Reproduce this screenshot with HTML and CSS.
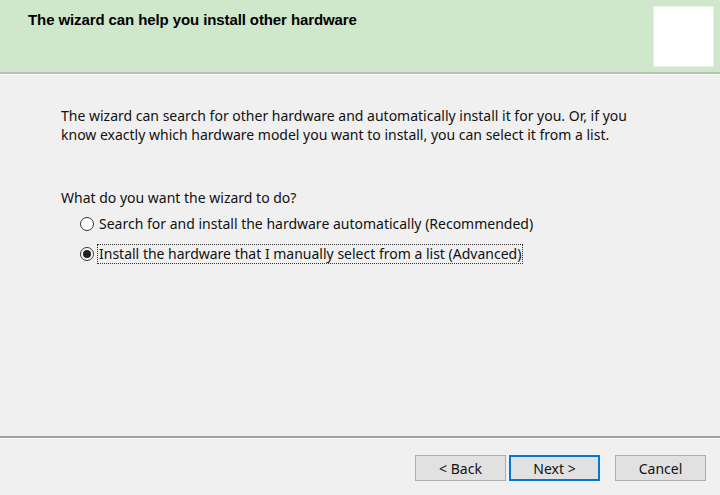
FILE: index.html
```html
<!DOCTYPE html>
<html lang="en">
<head>
<meta charset="utf-8">
<title>Add Hardware</title>
<link rel="stylesheet" href="styles.css">
</head>
<body>
<div class="wizard">
  <header class="head">
    <h1 class="title">The wizard can help you install other hardware</h1>
    <div class="logo"></div>
  </header>
  <main class="content">
    <p class="intro">The wizard can search for other hardware and automatically install it for you. Or, if you know exactly which hardware model you want to install, you can select it from a list.</p>
    <p class="question">What do you want the wizard to do?</p>
    <div class="options">
      <div class="opt"><span class="radio"></span><span class="label">Search for and install the hardware automatically (Recommended)</span></div>
      <div class="opt"><span class="radio checked"></span><span class="label focus">Install the hardware that I manually select from a list (Advanced)</span></div>
    </div>
  </main>
  <footer class="foot">
    <div class="nav">
      <button class="btn">&lt; Back</button>
      <button class="btn default">Next &gt;</button>
    </div>
    <button class="btn">Cancel</button>
  </footer>
</div>
</body>
</html>
```

FILE: styles.css
```css
html, body {
  margin: 0;
  padding: 0;
  background: #f0f0f0;
}
.wizard {
  width: 720px;
  height: 495px;
  display: flex;
  flex-direction: column;
  font-family: "Noto Sans", "Liberation Sans", sans-serif;
  font-size: 14px;
  color: #111;
}
.head {
  height: 72px;
  background: #cfe8cc;
  border-bottom: 2px solid #b3c4b0;
  box-shadow: 0 1px 0 #fbfbfb;
  display: flex;
  justify-content: space-between;
  align-items: flex-start;
  flex-shrink: 0;
}
.title {
  margin: 11px 0 0 28px;
  font-family: "Liberation Sans", sans-serif;
  font-weight: bold;
  font-size: 15px;
  color: #000;
  letter-spacing: -0.1px;
}
.logo {
  width: 59px;
  height: 59px;
  margin: 6px 6px 0 0;
  background: #fff;
  border: 1px solid #e6f3e4;
}
.content {
  flex: 1;
  padding: 0 0 0 61px;
}
.intro {
  margin: 32px 0 0 0;
  line-height: 19px;
  width: 575px;
}
.question {
  margin: 44px 0 0 0;
  line-height: 19px;
}
.options {
  display: flex;
  flex-direction: column;
  gap: 10px;
  margin: 7px 0 0 19px;
}
.opt {
  display: flex;
  align-items: center;
  height: 20px;
}
.radio {
  width: 12px;
  height: 12px;
  border: 1px solid #333;
  border-radius: 50%;
  background: #fff;
  margin-right: 5px;
  display: flex;
  align-items: center;
  justify-content: center;
  flex-shrink: 0;
}
.radio.checked::after {
  content: "";
  width: 8px;
  height: 8px;
  border-radius: 50%;
  background: #222;
}
.label {
  line-height: 18px;
  padding: 0 1px;
  border: 1px dotted transparent;
  margin-left: -2px;
}
.label.focus {
  border-color: #333;
}
.foot {
  height: 59px;
  border-top: 2px solid #a0a0a0;
  box-shadow: inset 0 1px 0 #fff;
  display: flex;
  justify-content: flex-end;
  align-items: flex-start;
  gap: 15px;
  padding: 17px 14px 0 0;
  box-sizing: border-box;
  flex-shrink: 0;
}
.nav {
  display: flex;
  gap: 3px;
}
.btn {
  width: 91px;
  height: 26px;
  margin: 0;
  padding: 0;
  font-family: "Noto Sans", "Liberation Sans", sans-serif;
  font-size: 14px;
  color: #111;
  background: #e1e1e1;
  border: 1px solid #adadad;
  box-sizing: border-box;
}
.btn.default {
  border: 2px solid #0078d7;
}
```
